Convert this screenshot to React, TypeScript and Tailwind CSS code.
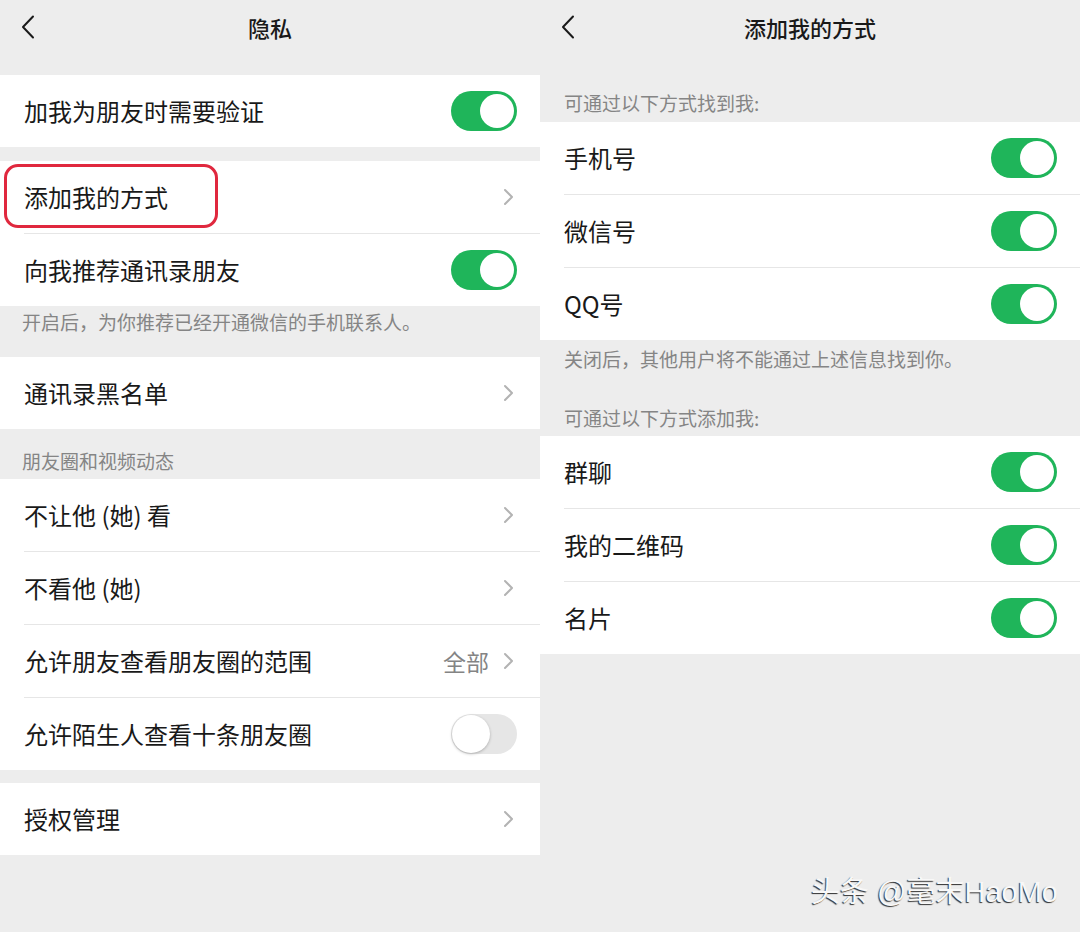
import React from "react"

type Right = "on" | "off" | "chevron" | { value: string }

const Toggle = (props: { on: boolean }) => {
    if (props.on) {
        return (
            <div className="w-[66px] h-[40px] rounded-full bg-[#1fb55a] flex items-center justify-end px-[3px]">
                <div className="w-[34px] h-[34px] rounded-full bg-white" />
            </div>
        )
    }
    return (
        <div className="w-[66px] h-[40px] rounded-full bg-[#e6e6e6] flex items-center justify-start px-[1px]">
            <div className="w-[38px] h-[38px] rounded-full bg-white shadow-[0_1px_3px_rgba(0,0,0,0.25)]" />
        </div>
    )
}

const Chevron = () => (
    <svg width="12" height="18" viewBox="0 0 12 18" fill="none" stroke="#b3b3b3" strokeWidth="2" strokeLinecap="round" strokeLinejoin="round">
        <polyline points="2 2 9 9 2 16" />
    </svg>
)

const BackIcon = () => (
    <svg width="14" height="24" viewBox="0 0 14 24" fill="none" stroke="#1a1a1a" strokeWidth="2" strokeLinecap="round" strokeLinejoin="round">
        <polyline points="12 1.5 2 12 12 22.5" />
    </svg>
)

const Row = (props: { label: string, right: Right, highlight?: boolean }) => {
    const r = props.right
    return (
        <div className="relative h-[72px] flex items-center justify-between pl-[24px] pr-[23px]">
            <span className="text-[24px] text-[#191919] leading-none">{props.label}</span>
            {r === "on" && <Toggle on={true} />}
            {r === "off" && <Toggle on={false} />}
            {r === "chevron" && <div className="pr-[2px]"><Chevron /></div>}
            {typeof r === "object" && (
                <div className="flex items-center gap-[14px] pr-[2px]">
                    <span className="text-[23px] text-[#848484] leading-none">{r.value}</span>
                    <Chevron />
                </div>
            )}
            {props.highlight && (
                <div className="absolute left-[4px] top-[3px] w-[214px] h-[64px] rounded-[14px] border-[3px] border-[#e0283e]" />
            )}
        </div>
    )
}

const Card = (props: { children: React.ReactNode[] | React.ReactNode }) => {
    const items = React.Children.toArray(props.children)
    return (
        <div className="bg-white">
            {items.map((c, i) => (
                <div key={i}>
                    {i > 0 && <div className="ml-[24px] h-px bg-[#e6e6e6]" />}
                    {c}
                </div>
            ))}
        </div>
    )
}

const Header = (props: { title: string }) => (
    <div className="relative h-[54px] flex items-center justify-center">
        <div className="absolute left-[21px] top-[15px]"><BackIcon /></div>
        <span className="text-[22px] font-medium text-[#191919]">{props.title}</span>
    </div>
)

const Note = (props: { text: string, className?: string }) => (
    <div className={"px-[22px] text-[19px] leading-[20px] text-[#858585] " + (props.className || "")}>{props.text}</div>
)

export default function App() {
    return (
        <div className="relative w-[1080px] h-[932px] flex bg-[#ededed] font-['Noto_Sans_CJK_SC','Noto_Sans',sans-serif] overflow-hidden">
            {/* left: 隐私 */}
            <div className="w-[540px] flex flex-col">
                <Header title="隐私" />
                <div className="h-[21px]" />
                <Card>
                    <Row label="加我为朋友时需要验证" right="on" />
                </Card>
                <div className="h-[14px]" />
                <Card>
                    <Row label="添加我的方式" right="chevron" highlight />
                    <Row label="向我推荐通讯录朋友" right="on" />
                </Card>
                <Note text="开启后，为你推荐已经开通微信的手机联系人。" className="pt-[6px] pb-[25px]" />
                <Card>
                    <Row label="通讯录黑名单" right="chevron" />
                </Card>
                <Note text="朋友圈和视频动态" className="pt-[22px] pb-[8px] text-[18px]" />
                <Card>
                    <Row label="不让他 (她) 看" right="chevron" />
                    <Row label="不看他 (她)" right="chevron" />
                    <Row label="允许朋友查看朋友圈的范围" right={{ value: "全部" }} />
                    <Row label="允许陌生人查看十条朋友圈" right="off" />
                </Card>
                <div className="h-[13px]" />
                <Card>
                    <Row label="授权管理" right="chevron" />
                </Card>
            </div>

            {/* right: 添加我的方式 */}
            <div className="w-[540px] flex flex-col">
                <Header title="添加我的方式" />
                <div className="h-[68px] flex items-end pb-[9px]">
                    <Note text="可通过以下方式找到我:" className="px-[24px]" />
                </div>
                <Card>
                    <Row label="手机号" right="on" />
                    <Row label="微信号" right="on" />
                    <Row label="QQ号" right="on" />
                </Card>
                <Note text="关闭后，其他用户将不能通过上述信息找到你。" className="pt-[9px] px-[24px]" />
                <Note text="可通过以下方式添加我:" className="pt-[39px] pb-[8px] px-[24px]" />
                <Card>
                    <Row label="群聊" right="on" />
                    <Row label="我的二维码" right="on" />
                    <Row label="名片" right="on" />
                </Card>
            </div>

            <div className="absolute right-[22px] top-[878px] text-[29px] leading-none font-['Liberation_Sans','Noto_Sans_CJK_SC',sans-serif] text-[#f8f8f8] [text-shadow:-1px_1px_1px_rgba(0,0,0,0.8)] whitespace-nowrap">
                头条 @毫末HaoMo
            </div>
        </div>
    )
}
